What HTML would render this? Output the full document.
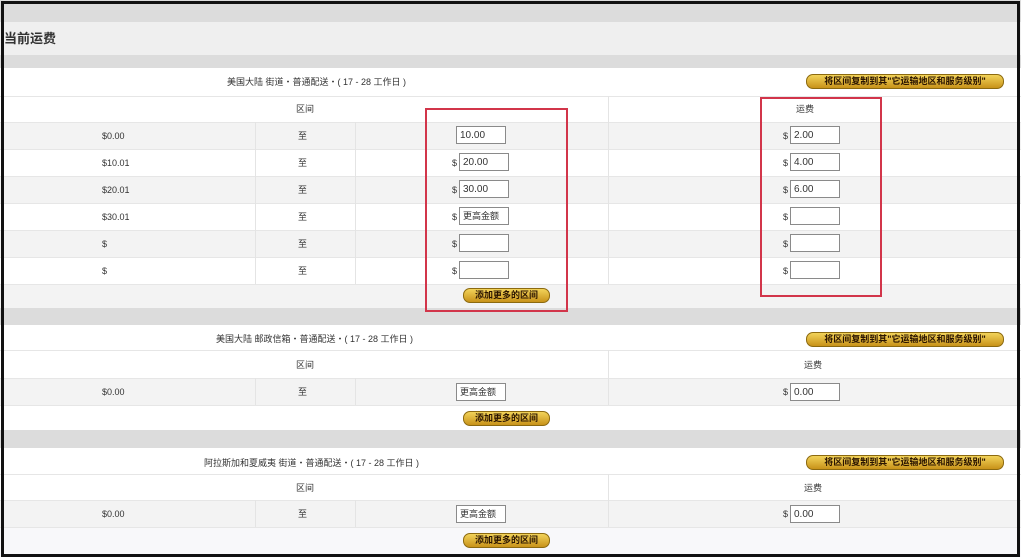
<!DOCTYPE html>
<html><head><meta charset="utf-8"><style>
*{margin:0;padding:0;box-sizing:border-box}
body{width:1021px;height:560px;background:#fff;position:relative;overflow:hidden;font-family:"Liberation Sans","Noto Sans CJK SC",sans-serif;font-size:9px;color:#333}
.a{position:absolute}
.band{position:absolute;left:0;width:1021px;background:#dcdcdc}
.row{position:absolute;left:0;width:1021px;border-top:1px solid #e6e6e6}
.g{background:#f3f3f3}
.t{position:absolute;white-space:nowrap;line-height:12px}
.in{position:absolute;width:50px;height:18px;border:1px solid #8a8a8a;background:#fff;font-size:10px;line-height:17px;padding-left:3px;color:#333}
.btn{position:absolute;height:15px;border-radius:7px;background:linear-gradient(#f2d35a,#c8931a);border:1px solid #8c6a10;color:#2a1400;font-weight:bold;font-size:9px;line-height:13px;text-align:center;white-space:nowrap;overflow:hidden}
.vl{position:absolute;width:1px;background:#e4e4e4}
.red{position:absolute;border:2px solid #d2354a}
</style></head><body>
<div class="band" style="top:0;height:22px"></div>
<div class="a" style="top:22px;left:0;width:1021px;height:33px;background:#efefef"></div>
<div class="t" style="left:4px;top:33px;font-size:13px;font-weight:bold;color:#333">当前运费</div>
<div class="band" style="top:55px;height:13px"></div>

<div class="t" style="left:227px;top:76px">美国大陆 街道・普通配送・( 17 - 28 工作日 )</div>
<div class="btn" style="left:806px;top:74px;width:198px">将区间复制到其"它运输地区和服务级别"</div>
<div class="row" style="top:96px;height:26px"></div>
<div class="t" style="left:296px;top:103px">区间</div>
<div class="t" style="left:796px;top:103px">运费</div>
<div class="row g" style="top:122px;height:27px"></div>
<div class="row" style="top:149px;height:27px"></div>
<div class="row g" style="top:176px;height:27px"></div>
<div class="row" style="top:203px;height:27px"></div>
<div class="row g" style="top:230px;height:27px"></div>
<div class="row" style="top:257px;height:27px"></div>
<div class="row g" style="top:284px;height:24px"></div>
<div class="vl" style="left:255px;top:122px;height:162px"></div>
<div class="vl" style="left:355px;top:122px;height:162px"></div>
<div class="vl" style="left:608px;top:96px;height:188px"></div>
<div class="t" style="left:102px;top:130px">$0.00</div>
<div class="t" style="left:102px;top:157px">$10.01</div>
<div class="t" style="left:102px;top:184px">$20.01</div>
<div class="t" style="left:102px;top:211px">$30.01</div>
<div class="t" style="left:102px;top:238px">$</div>
<div class="t" style="left:102px;top:265px">$</div>
<div class="t" style="left:298px;top:130px">至</div>
<div class="t" style="left:298px;top:157px">至</div>
<div class="t" style="left:298px;top:184px">至</div>
<div class="t" style="left:298px;top:211px">至</div>
<div class="t" style="left:298px;top:238px">至</div>
<div class="t" style="left:298px;top:265px">至</div>
<div class="in" style="left:456px;top:126px">10.00</div>
<div class="t" style="left:452px;top:157px">$</div><div class="in" style="left:459px;top:153px">20.00</div>
<div class="t" style="left:452px;top:184px">$</div><div class="in" style="left:459px;top:180px">30.00</div>
<div class="t" style="left:452px;top:211px">$</div><div class="in" style="left:459px;top:207px;font-size:9px">更高金额</div>
<div class="t" style="left:452px;top:238px">$</div><div class="in" style="left:459px;top:234px"></div>
<div class="t" style="left:452px;top:265px">$</div><div class="in" style="left:459px;top:261px"></div>
<div class="t" style="left:783px;top:130px">$</div><div class="in" style="left:790px;top:126px">2.00</div>
<div class="t" style="left:783px;top:157px">$</div><div class="in" style="left:790px;top:153px">4.00</div>
<div class="t" style="left:783px;top:184px">$</div><div class="in" style="left:790px;top:180px">6.00</div>
<div class="t" style="left:783px;top:211px">$</div><div class="in" style="left:790px;top:207px"></div>
<div class="t" style="left:783px;top:238px">$</div><div class="in" style="left:790px;top:234px"></div>
<div class="t" style="left:783px;top:265px">$</div><div class="in" style="left:790px;top:261px"></div>
<div class="btn" style="left:463px;top:288px;width:87px">添加更多的区间</div>
<div class="band" style="top:308px;height:17px"></div>

<div class="t" style="left:216px;top:333px">美国大陆 邮政信箱・普通配送・( 17 - 28 工作日 )</div>
<div class="btn" style="left:806px;top:332px;width:198px">将区间复制到其"它运输地区和服务级别"</div>
<div class="row" style="top:350px;height:28px"></div>
<div class="t" style="left:296px;top:359px">区间</div>
<div class="t" style="left:804px;top:359px">运费</div>
<div class="row g" style="top:378px;height:27px"></div>
<div class="row" style="top:405px;height:25px"></div>
<div class="vl" style="left:255px;top:378px;height:27px"></div>
<div class="vl" style="left:355px;top:378px;height:27px"></div>
<div class="vl" style="left:608px;top:350px;height:55px"></div>
<div class="t" style="left:102px;top:386px">$0.00</div>
<div class="t" style="left:298px;top:386px">至</div>
<div class="in" style="left:456px;top:383px;font-size:9px">更高金额</div>
<div class="t" style="left:783px;top:386px">$</div><div class="in" style="left:790px;top:383px">0.00</div>
<div class="btn" style="left:463px;top:411px;width:87px">添加更多的区间</div>
<div class="band" style="top:430px;height:18px"></div>

<div class="t" style="left:204px;top:457px">阿拉斯加和夏威夷 街道・普通配送・( 17 - 28 工作日 )</div>
<div class="btn" style="left:806px;top:455px;width:198px">将区间复制到其"它运输地区和服务级别"</div>
<div class="row" style="top:474px;height:26px"></div>
<div class="t" style="left:296px;top:482px">区间</div>
<div class="t" style="left:804px;top:482px">运费</div>
<div class="row g" style="top:500px;height:27px"></div>
<div class="row" style="top:527px;height:30px;background:#f8f8fa"></div>
<div class="vl" style="left:255px;top:500px;height:27px"></div>
<div class="vl" style="left:355px;top:500px;height:27px"></div>
<div class="vl" style="left:608px;top:474px;height:53px"></div>
<div class="t" style="left:102px;top:508px">$0.00</div>
<div class="t" style="left:298px;top:508px">至</div>
<div class="in" style="left:456px;top:505px;font-size:9px">更高金额</div>
<div class="t" style="left:783px;top:508px">$</div><div class="in" style="left:790px;top:505px">0.00</div>
<div class="btn" style="left:463px;top:533px;width:87px">添加更多的区间</div>

<div class="red" style="left:425px;top:108px;width:143px;height:204px"></div>
<div class="red" style="left:760px;top:97px;width:122px;height:200px"></div>

<div class="a" style="left:1px;top:1px;width:1019px;height:556px;border:3px solid #111"></div>
</body></html>
